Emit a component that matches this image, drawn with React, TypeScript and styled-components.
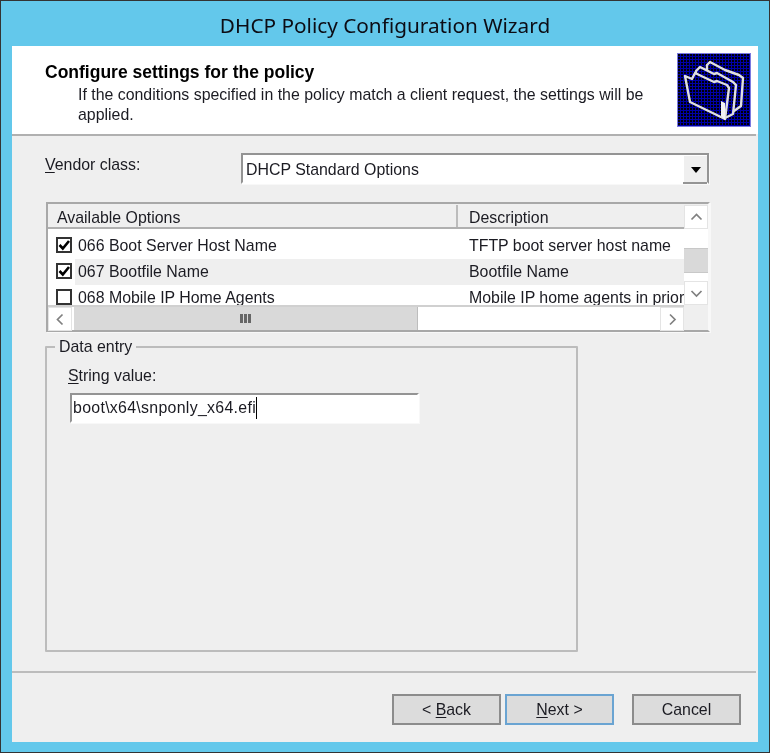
import React from 'react';
import styled, { createGlobalStyle } from 'styled-components';

const GlobalStyle = createGlobalStyle`
  html, body { margin: 0; padding: 0; background: #63c8eb; }
  * { box-sizing: border-box; }
  body { font-family: 'Liberation Sans', Arial, sans-serif; font-size: 15.9px; color: #1b1b22; }
`;

const Win = styled.div`
  width: 770px;
  height: 753px;
  border: 1px solid #333;
  background: #63c8eb;
  display: flex;
  flex-direction: column;
  overflow: hidden;
  filter: blur(0.3px);
`;

const TitleBar = styled.div`
  height: 45px;
  flex: none;
  display: flex;
  align-items: center;
  justify-content: center;
  padding-top: 2px;
  font-family: 'Noto Sans', sans-serif;
  font-size: 20.75px;
  color: #0c0c14;
`;

const Client = styled.div`
  margin: 0 11px 10px;
  width: 746px;
  flex: 1;
  background: #efefef;
  display: flex;
  flex-direction: column;
`;

const Header = styled.div`
  height: 88px;
  flex: none;
  background: #fff;
  display: flex;
  justify-content: space-between;
  padding: 7px 7px 0 33px;
`;

const HeaderRule = styled.div`
  height: 2px;
  width: 744px;
  flex: none;
  background: #b0b0b0;
`;

const HeaderText = styled.div`
  padding-top: 9px;
`;

const HeaderTitle = styled.div`
  font-weight: bold;
  font-size: 17.5px;
  line-height: 20px;
  color: #000;
`;

const HeaderSub = styled.div`
  width: 590px;
  margin: 3px 0 0 33px;
  line-height: 20px;
  color: #1b1b22;
`;

const Body = styled.div`
  flex: 1;
  display: flex;
  flex-direction: column;
  padding: 17px 0 0 33px;
`;

const VendorRow = styled.div`
  display: flex;
  height: 31px;
  width: 664px;
`;

const VendorLabel = styled.div`
  width: 196px;
  line-height: 23px;
`;

const Combo = styled.div`
  flex: 1;
  background: #fff;
  border: 2px solid #949494;
  border-bottom-color: #fff;
  box-shadow: 1px 1px 0 #f8f8f8;
  display: flex;
  justify-content: space-between;
  padding-left: 3px;
  line-height: 30px;
`;

const ComboButton = styled.div`
  width: 24px;
  height: 100%;
  background: #efefef;
  display: flex;
  align-items: center;
  justify-content: center;
  border-left: 1px solid #fff;
  border-top: 1px solid #fff;
  box-shadow: 0 2px 0 #949494;
`;

const ComboCaret = styled.div`
  width: 0;
  height: 0;
  margin-top: 2px;
  border-left: 5px solid transparent;
  border-right: 5px solid transparent;
  border-top: 6px solid #000;
`;

const ListBox = styled.div`
  margin-top: 18px;
  margin-left: 1px;
  width: 664px;
  height: 130px;
  border: 2px solid #a8a8a8;
  border-right-color: #f8f8f8;
  box-shadow: 1px 1px 0 #f8f8f8;
  display: grid;
  grid-template-columns: 636px 24px;
  grid-template-rows: 100px 25px;
  background: #efefef;
  padding-top: 1px;
`;

const ListMain = styled.div`
  overflow: hidden;
  background: #fff;
`;

const ListHead = styled.div`
  height: 24px;
  margin-bottom: 4px;
  background: #efefef;
  border-bottom: 2px solid #b0b0b0;
  display: flex;
  line-height: 25px;
`;

const HeadCell = styled.div<{ $width: number }>`
  width: ${(p) => p.$width}px;
  padding-left: ${(p) => (p.$width > 300 ? 9 : 11)}px;
  border-right: ${(p) => (p.$width > 300 ? '2px solid #bcbcbc' : 'none')};
  flex: none;
`;

const Row = styled.div`
  height: 26px;
  display: flex;
  align-items: center;
  background: #fff;
  white-space: nowrap;
`;

const RowBody = styled.div<{ $alt?: boolean }>`
  flex: 1;
  height: 100%;
  display: flex;
  align-items: center;
  padding-left: 3px;
  background: ${(p) => (p.$alt ? '#efefef' : '#fff')};
`;

const NameCell = styled.div`
  width: 391px;
  flex: none;
`;

const Check = styled.div`
  width: 16px;
  height: 16px;
  margin: -2px 3px 0 8px;
  flex: none;
  border: 2px solid #333;
  background: #fff;
  display: flex;
  align-items: center;
  justify-content: center;
`;

const VScroll = styled.div`
  background: #fff;
  display: flex;
  flex-direction: column;
`;

const ScrollBtn = styled.div`
  flex: none;
  width: 24px;
  height: 24px;
  background: #fff;
  border: 1px solid #e4e4e4;
  display: flex;
  align-items: center;
  justify-content: center;
`;

const VTrack = styled.div`
  flex: 1;
  display: flex;
  flex-direction: column;
  padding: 19px 0 7px;
`;

const VThumb = styled.div`
  height: 25px;
  background: #d9d9d9;
  border-top: 1px solid #c8c8c8;
  border-bottom: 1px solid #c8c8c8;
`;

const HScroll = styled.div`
  background: #fff;
  display: flex;
  border-top: 2px solid #d0d0d0;
`;

const HThumb = styled.div`
  width: 344px;
  margin-left: 2px;
  background: #d9d9d9;
  border-right: 1px solid #bdbdbd;
  display: flex;
  align-items: center;
  justify-content: center;
  gap: 1px;
`;

const Grip = styled.div`
  width: 3px;
  height: 9px;
  background: #666;
`;

const HTrack = styled.div`
  flex: 1;
`;

const Group = styled.fieldset`
  margin: 5px 0 0 0;
  padding: 0 0 0 21px;
  width: 533px;
  height: 315px;
  border: 2px solid #bcbcbc;
  border-radius: 1px;
`;

const GroupLegend = styled.legend`
  margin-left: -13px;
  padding: 0 4px;
  line-height: 19px;
`;

const StringLabel = styled.div`
  line-height: 20px;
  margin-top: 10px;
`;

const StringInput = styled.div`
  margin: 7px 0 0 2px;
  width: 349px;
  height: 30px;
  background: #fff;
  border: 2px solid #949494;
  border-right-color: #fff;
  border-bottom-color: #fff;
  box-shadow: 1px 1px 0 #f8f8f8;
  display: flex;
  align-items: center;
  padding-left: 1px;
  letter-spacing: 0.3px;
`;

const Caret = styled.span`
  display: inline-block;
  width: 1px;
  height: 22px;
  background: #000;
`;

const Footer = styled.div`
  height: 71px;
  flex: none;
  border-top: 2px solid #bcbcbc;
  width: 744px;
  display: flex;
  justify-content: flex-end;
  padding: 21px 15px 0 0;
`;

const WizButton = styled.div<{ $primary?: boolean; $gap?: number }>`
  width: 109px;
  height: 31px;
  margin-left: ${(p) => p.$gap ?? 0}px;
  background: #dcdcdc;
  border: 2px solid ${(p) => (p.$primary ? '#6aa4d2' : '#8c8c8c')};
  display: flex;
  align-items: center;
  justify-content: center;
`;

const Key = styled.span`
  text-decoration: underline;
  text-underline-offset: 2px;
`;

const FolderIcon: React.FC = () => (
  <svg width="74" height="74" viewBox="0 0 74 74">
    <defs>
      <pattern id="dots" width="3" height="3" patternUnits="userSpaceOnUse">
        <rect width="3" height="3" fill="#0000a8" />
        <rect x="1" y="1" width="2" height="2" fill="#000008" />
      </pattern>
    </defs>
    <rect x="0.5" y="0.5" width="73" height="73" fill="url(#dots)" stroke="#7a7ae0" />
    <g fill="url(#dots)" stroke="#e0e0e0" strokeWidth="2.4" strokeLinejoin="round">
      <path d="M30 12 L33 9 L48 17 L62 22 L66 25 L64 53 L57 58 L30 40Z" />
      <path d="M19 18 L23 14 L37 21 L40 20 L56 29 L59 32 L56 61 L48 65 L19 40Z" />
      <path d="M8 23 L15 26 L18 20 L37 29 L40 28 L50 32 L52 35 L48 66 L13 49Z" />
    </g>
    <path d="M44 48 L48 50 L48 67 L44 63Z" fill="#f4f4f4" />
  </svg>
);

const CheckMark: React.FC = () => (
  <svg width="12" height="12" viewBox="0 0 12 12">
    <path d="M1.5 6 L4.8 9.5 L11 2" fill="none" stroke="#000" strokeWidth="2.6" />
  </svg>
);

const Chevron: React.FC<{ dir: 'up' | 'down' | 'left' | 'right' }> = ({ dir }) => {
  const paths = {
    up: 'M1.5 8.5 L6.5 3.5 L11.5 8.5',
    down: 'M1.5 4 L6.5 9 L11.5 4',
    left: 'M8.5 1.5 L3.5 6.5 L8.5 11.5',
    right: 'M4 1.5 L9 6.5 L4 11.5',
  };
  return (
    <svg width="13" height="13" viewBox="0 0 13 13">
      <path d={paths[dir]} fill="none" stroke="#808080" strokeWidth="1.7" />
    </svg>
  );
};

const options = [
  { name: '066 Boot Server Host Name', desc: 'TFTP boot server host name', checked: true },
  { name: '067 Bootfile Name', desc: 'Bootfile Name', checked: true, alt: true },
  { name: '068 Mobile IP Home Agents', desc: 'Mobile IP home agents in priority order', checked: false },
];

export default function App() {
  return (
    <Win>
      <GlobalStyle />
      <TitleBar>DHCP Policy Configuration Wizard</TitleBar>
      <Client>
        <Header>
          <HeaderText>
            <HeaderTitle>Configure settings for the policy</HeaderTitle>
            <HeaderSub>
              If the conditions specified in the policy match a client request, the settings will be applied.
            </HeaderSub>
          </HeaderText>
          <FolderIcon />
        </Header>
        <HeaderRule />
        <Body>
          <VendorRow>
            <VendorLabel>
              <Key>V</Key>endor class:
            </VendorLabel>
            <Combo>
              DHCP Standard Options
              <ComboButton>
                <ComboCaret />
              </ComboButton>
            </Combo>
          </VendorRow>
          <ListBox>
            <ListMain>
              <ListHead>
                <HeadCell $width={410}>Available Options</HeadCell>
                <HeadCell $width={226}>Description</HeadCell>
              </ListHead>
              {options.map((o) => (
                <Row key={o.name}>
                  <Check>{o.checked && <CheckMark />}</Check>
                  <RowBody $alt={o.alt}>
                    <NameCell>{o.name}</NameCell>
                    {o.desc}
                  </RowBody>
                </Row>
              ))}
            </ListMain>
            <VScroll>
              <ScrollBtn>
                <Chevron dir="up" />
              </ScrollBtn>
              <VTrack>
                <VThumb />
              </VTrack>
              <ScrollBtn>
                <Chevron dir="down" />
              </ScrollBtn>
            </VScroll>
            <HScroll>
              <ScrollBtn>
                <Chevron dir="left" />
              </ScrollBtn>
              <HThumb>
                <Grip />
                <Grip />
                <Grip />
              </HThumb>
              <HTrack />
              <ScrollBtn>
                <Chevron dir="right" />
              </ScrollBtn>
            </HScroll>
          </ListBox>
          <Group>
            <GroupLegend>Data entry</GroupLegend>
            <StringLabel>
              <Key>S</Key>tring value:
            </StringLabel>
            <StringInput>
              boot\x64\snponly_x64.efi
              <Caret />
            </StringInput>
          </Group>
        </Body>
        <Footer>
          <WizButton>
            &lt;&nbsp;<Key>B</Key>ack
          </WizButton>
          <WizButton $primary $gap={4}>
            <Key>N</Key>ext &gt;
          </WizButton>
          <WizButton $gap={18}>Cancel</WizButton>
        </Footer>
      </Client>
    </Win>
  );
}
